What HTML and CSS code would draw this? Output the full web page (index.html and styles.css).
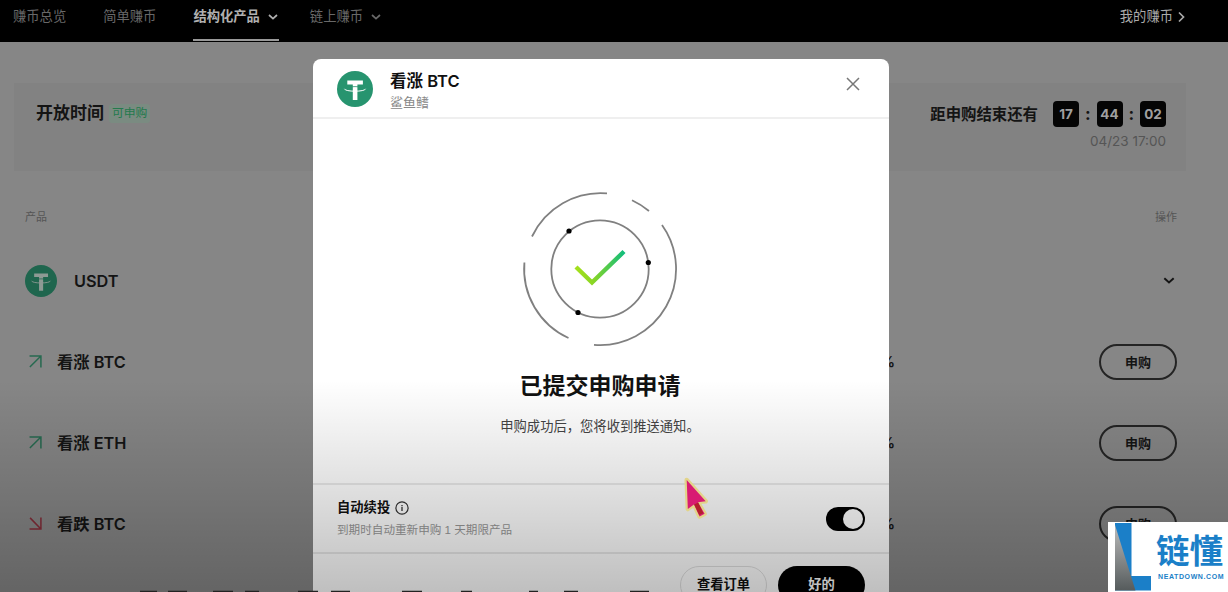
FILE: index.html
```html
<!DOCTYPE html>
<html lang="zh-CN">
<head>
    <meta charset="UTF-8">
    <meta name="viewport" content="width=device-width, initial-scale=1.0">
    <title>结构化产品 - 看涨 BTC</title>
    <link rel="stylesheet" href="styles.css">
</head>
<body>
    <svg class="defs" width="0" height="0">
        <symbol id="tether" viewBox="0 0 36 36">
            <circle cx="18" cy="18" r="18" fill="var(--coin)"/>
            <path d="M10.3 9.5h15.6v4h-5.5V29h-4.6V13.5h-5.5z" fill="var(--coin-mark)"/>
            <path d="M7.5 17.8c0 3.2 21 3.2 21 0" fill="none" stroke="var(--coin-mark)" stroke-width="1"/>
            <path d="M12 16.2c3 -.8 9 -.8 12 0" fill="none" stroke="var(--coin)" stroke-width=".8"/>
        </symbol>
        <symbol id="chevron-down" viewBox="0 0 10 6">
            <path d="M1 1l4 3.6L9 1" fill="none" stroke="currentColor" stroke-width="1.7"/>
        </symbol>
        <symbol id="arrow-up" viewBox="0 0 12 12">
            <path d="M.5 1h10.5v10.5M11 1L.8 11" fill="none" stroke="currentColor" stroke-width="1.4"/>
        </symbol>
    </svg>

    <header class="topbar">
        <nav class="nav">
            <a class="nav-item">赚币总览</a>
            <a class="nav-item">简单赚币</a>
            <a class="nav-item active">结构化产品 <svg class="chevron"><use href="#chevron-down"/></svg></a>
            <a class="nav-item">链上赚币 <svg class="chevron"><use href="#chevron-down"/></svg></a>
        </nav>
        <a class="my-earn">我的赚币
            <svg width="7" height="12" viewBox="0 0 7 12"><path d="M1 1.5L5.5 6 1 10.5" fill="none" stroke="currentColor" stroke-width="1.7"/></svg>
        </a>
    </header>

    <main class="page">
        <section class="schedule">
            <div class="open-time">
                <h2>开放时间</h2>
                <span class="tag">可申购</span>
            </div>
            <div class="deadline">
                <div class="countdown">
                    <span class="countdown-label">距申购结束还有</span>
                    <span class="digit">17</span><span class="colon">:</span>
                    <span class="digit">44</span><span class="colon">:</span>
                    <span class="digit">02</span>
                </div>
                <div class="date">04/23 17:00</div>
            </div>
        </section>

        <section class="products">
            <div class="table-head"><span>产品</span><span>操作</span></div>
            <div class="row coin-row">
                <svg class="coin"><use href="#tether"/></svg>
                <span class="name">USDT</span>
                <svg class="expand"><use href="#chevron-down"/></svg>
            </div>
            <div class="row">
                <svg class="trend"><use href="#arrow-up"/></svg>
                <span class="name">看涨 BTC</span>
                <span class="rate">%</span>
                <button class="subscribe">申购</button>
            </div>
            <div class="row">
                <svg class="trend"><use href="#arrow-up"/></svg>
                <span class="name">看涨 ETH</span>
                <span class="rate">%</span>
                <button class="subscribe">申购</button>
            </div>
            <div class="row">
                <svg class="trend down"><use href="#arrow-up"/></svg>
                <span class="name">看跌 BTC</span>
                <span class="rate">%</span>
                <button class="subscribe">申购</button>
            </div>
        </section>
    </main>

    <div class="modal">
        <div class="modal-head">
            <svg class="coin"><use href="#tether"/></svg>
            <div class="modal-title">
                <h3>看涨 BTC</h3>
                <p>鲨鱼鳍</p>
            </div>
            <svg class="close" width="14" height="14" viewBox="0 0 14 14"><path d="M1 1l12 12M13 1L1 13" stroke="#777" stroke-width="1.5"/></svg>
        </div>
        <div class="modal-body">
            <svg class="success" width="160" height="160" viewBox="0 0 160 160">
                <defs>
                    <linearGradient id="tick" x1="0" y1="0" x2="1" y2="0">
                        <stop offset="0" stop-color="#a4e01c"/>
                        <stop offset=".35" stop-color="#8bd624"/>
                        <stop offset="1" stop-color="#12bd7c"/>
                    </linearGradient>
                </defs>
                <g fill="none" stroke="#808080" stroke-width="1.8">
                    <circle cx="80" cy="80" r="48.7"/>
                    <path d="M12 47.5A76 76 0 0 1 87 4.4"/>
                    <path d="M112 11.2A76 76 0 0 1 129 22"/>
                    <path d="M142 36A76 76 0 0 1 74 155.8"/>
                    <path d="M4.4 73.5A76 76 0 0 0 48.500 149"/>
                </g>
                <g fill="#000">
                    <circle cx="49" cy="42" r="2.6"/>
                    <circle cx="128.3" cy="73.5" r="2.6"/>
                    <circle cx="58" cy="123.5" r="2.6"/>
                </g>
                <path d="M56 78l16 15.500L104 62.500" fill="none" stroke="url(#tick)" stroke-width="4.4"/>
            </svg>
            <h1>已提交申购申请</h1>
            <p>申购成功后，您将收到推送通知。</p>
        </div>
        <div class="renew">
            <div>
                <div class="renew-title">自动续投
                    <svg width="14" height="14" viewBox="0 0 14 14"><circle cx="7" cy="7" r="6.1" fill="none" stroke="#333" stroke-width="1.2"/><path d="M7 4v1.200M7 6v4" stroke="#333" stroke-width="1.3"/></svg>
                </div>
                <p>到期时自动重新申购 1 天期限产品</p>
            </div>
            <span class="switch"></span>
        </div>
        <div class="modal-foot">
            <button class="btn">查看订单</button>
            <button class="btn primary">好的</button>
        </div>
    </div>

    <div class="shade"></div>

    <!-- top edge of the player's subtitle line -->
    <svg class="subtitle-edge" width="1228" height="2" viewBox="0 0 1228 2">
        <path d="M140 1.500h17M168 1.500h19M213 1.500h20M245 1.500h14M298 1.500h20M331 1.500h19M402 1.500h20M461 1.500h11M529 1.500h9M564 1.500h14M630 1.500h19" stroke="#222" stroke-width="1.300"/>
    </svg>

    <svg class="cursor" width="38" height="52" viewBox="0 0 34 46">
        <path d="M6 6l17 19-7 .8 6 10.500-4.500 2.300-5-10.600L7 32z" fill="#d81b72" stroke="#e2d48a" stroke-width="4" stroke-linejoin="round" paint-order="stroke"/>
        <path d="M14.500 27l4.500 9.500" stroke="#b3202c" stroke-width="4"/>
    </svg>

    <div class="watermark">
        <svg width="36" height="70" viewBox="0 0 36 70">
            <defs>
                <linearGradient id="steel" x1="0" y1="0" x2="0" y2="1">
                    <stop offset="0" stop-color="#bbb"/>
                    <stop offset="1" stop-color="#555b5c"/>
                </linearGradient>
            </defs>
            <path d="M0 1h16.500v53H36v14.500H0z" fill="#1b7fc8"/>
            <path d="M0 3l20.500 65.500H0z" fill="url(#steel)"/>
        </svg>
        <div class="brand">
            <strong>链懂</strong>
            <span>NEATDOWN.COM</span>
        </div>
    </div>
</body>
</html>
```
FILE: styles.css
```css
:root {
    --page: #868686;
    --ink: #141414;
    --coin: #27946f;
    --coin-mark: #fff;
}

* {
    box-sizing: border-box;
}

body {
    margin: 0;
    width: 1228px;
    height: 592px;
    overflow: hidden;
    position: relative;
    background: var(--page);
    color: var(--ink);
    font-family: "Liberation Sans", "Noto Sans CJK SC", sans-serif;
}

h1, h2, h3, p {
    margin: 0;
}

.defs {
    position: absolute;
}

button {
    font-family: inherit;
    padding: 0;
}

/* Top navigation */
.topbar {
    display: flex;
    justify-content: space-between;
    height: 42px;
    padding: 0 43px 0 13px;
    background: #000;
    font-size: 13.3px;
    line-height: 20px;
}

.nav {
    display: flex;
    gap: 37px;
}

.nav-item {
    display: flex;
    align-items: center;
    gap: 8px;
    height: 41px;
    padding-bottom: 6px;
    color: #686868;
    border-bottom: 2px solid transparent;
}

.nav-item:nth-child(3) {
    margin-right: -6px;
    padding-right: 1px;
}

.nav-item.active {
    color: #b0b0b0;
    font-weight: 600;
    border-bottom-color: #999;
}

.chevron {
    width: 10px;
    height: 6px;
}

.my-earn {
    display: flex;
    align-items: center;
    gap: 5px;
    height: 33px;
    color: #aaa;
}

/* Schedule panel */
.schedule {
    display: flex;
    justify-content: space-between;
    height: 88px;
    margin: 41px 42px 0 14px;
    padding: 17px 20px 0 22px;
    background: #828282;
}

.open-time {
    display: flex;
    gap: 5px;
}

.open-time h2 {
    font-size: 17px;
    font-weight: 600;
    line-height: 27px;
}

.tag {
    height: 19px;
    margin-top: 4px;
    padding: 0 3px;
    border-radius: 3px;
    background: #7a8b81;
    color: #237a4d;
    font-size: 11.8px;
    line-height: 19px;
}

.countdown {
    display: flex;
    align-items: center;
    height: 28px;
}

.countdown-label {
    margin: -2px 15px 0 0;
    font-size: 15.4px;
    font-weight: 600;
}

.digit {
    width: 26px;
    height: 26px;
    border-radius: 4px;
    background: #050505;
    color: #a0a0a0;
    font: bold 13.5px/27px Inter, sans-serif;
    text-align: center;
}

.colon {
    width: 17.5px;
    font: bold 17px/22px Inter, sans-serif;
    text-align: center;
}

.date {
    margin-top: 4px;
    color: #555;
    font: 13.5px/18px Inter, sans-serif;
    text-align: right;
}

/* Product list */
.products {
    padding: 36px 51px 0 25px;
}

.table-head {
    display: flex;
    justify-content: space-between;
    height: 33px;
    color: #555;
    font-size: 11px;
    line-height: 20px;
}

.row {
    display: flex;
    align-items: center;
    height: 81px;
    padding-left: 4px;
}

.coin-row {
    padding: 0 2px 0 0;
}

.coin-row .coin {
    --coin: #1f664e;
    --coin-mark: #8d9a94;
    width: 32px;
    height: 32px;
    margin-right: 17px;
}

/* the symbol resolves its colours where it is used */
.coin use {
    color: inherit;
}

.name {
    font: 600 16.3px "Inter", "Noto Sans CJK SC", sans-serif;
}

.row .name {
    flex: none;
    width: 500px;
    padding-bottom: 2px;
}

.coin-row .name {
    padding-bottom: 0;
}

.expand {
    width: 12px;
    height: 7px;
    margin-left: auto;
}

.trend {
    flex: none;
    width: 13px;
    height: 13px;
    margin-right: 15px;
    color: #276a50;
}

.trend.down {
    color: #842c38;
    transform: rotate(90deg);
}

.rate {
    flex: none;
    width: 18px;
    margin-left: 320px;
    font: 600 15px Inter, sans-serif;
    text-align: right;
}

.subscribe {
    width: 78px;
    height: 36px;
    margin: 0 0 0 auto;
    border: 2px solid #242424;
    border-radius: 18px;
    background: transparent;
    color: var(--ink);
    font-size: 13px;
    font-weight: 600;
}

/* Confirmation dialog */
.modal {
    position: absolute;
    top: 59px;
    left: 313px;
    width: 576px;
    height: 560px;
    border-radius: 8px;
    background: #fff;
    color: #111;
}

.modal-head {
    display: flex;
    height: 60px;
    padding: 12px 29px 0 24px;
    border-bottom: 2px solid #efefef;
}

.modal-head .coin {
    width: 36px;
    height: 36px;
}

.modal-title {
    flex: 1;
    padding-left: 17px;
}

.modal-title h3 {
    margin-top: -2px;
    font: 600 16.5px/24px Inter, "Noto Sans CJK SC", sans-serif;
}

.modal-title p {
    color: #888;
    font-size: 13px;
    line-height: 19px;
}

.close {
    margin-top: 6px;
}

.modal-body {
    display: flex;
    flex-direction: column;
    align-items: center;
    height: 364px;
    padding: 70px 2px 0 0;
}

.modal-body h1 {
    margin-top: 20px;
    font-size: 23px;
    font-weight: 600;
    line-height: 34px;
}

.modal-body p {
    margin-top: 14px;
    color: #444;
    font-size: 13.3px;
    line-height: 20px;
}

.renew {
    display: flex;
    justify-content: space-between;
    align-items: center;
    height: 71px;
    padding: 0 24px;
    border-top: 2px solid #eaeaea;
    border-bottom: 2px solid #e9e9e9;
}

.renew-title {
    display: flex;
    align-items: center;
    gap: 5px;
    font-size: 13.3px;
    font-weight: 600;
    line-height: 22px;
}

.renew p {
    margin-top: 1px;
    color: #999;
    font-size: 11.6px;
    line-height: 20px;
}

.switch {
    display: flex;
    justify-content: flex-end;
    width: 39px;
    height: 24px;
    padding: 2px;
    border-radius: 12px;
    background: #000;
}

.switch::after {
    content: "";
    width: 20px;
    height: 20px;
    border-radius: 50%;
    background: #fff;
}

.modal-foot {
    display: flex;
    justify-content: flex-end;
    gap: 11px;
    padding: 12px 24px 0;
}

.btn {
    width: 87px;
    height: 38px;
    border: 1px solid #e0e0e0;
    border-radius: 19px;
    background: transparent;
    color: #111;
    font-size: 13.3px;
    font-weight: 600;
    line-height: 34px;
}

.btn.primary {
    border: 0;
    background: #000;
    color: #fff;
}

/* Darkening towards the bottom of the player */
.shade {
    position: absolute;
    inset: 380px 0 0;
    background: linear-gradient(rgba(0, 0, 0, 0), rgba(0, 0, 0, .12) 50%, rgba(0, 0, 0, .25));
}

.subtitle-edge {
    position: absolute;
    left: 0;
    bottom: 0;
}

.cursor {
    position: absolute;
    top: 473px;
    left: 680px;
}

.watermark {
    position: absolute;
    right: 0;
    bottom: 0;
    display: flex;
    gap: 5px;
    width: 120px;
    height: 70px;
    padding-left: 7px;
    background: #fff;
    color: #1b7fc8;
}

.watermark svg {
    flex: none;
}

.brand strong {
    display: block;
    margin-top: 10px;
    font-size: 33.5px;
    font-weight: 600;
    line-height: 40px;
    white-space: nowrap;
}

.brand span {
    display: block;
    margin-left: 2px;
    font-size: 7px;
    font-weight: bold;
    letter-spacing: .6px;
    line-height: 9px;
}
```
